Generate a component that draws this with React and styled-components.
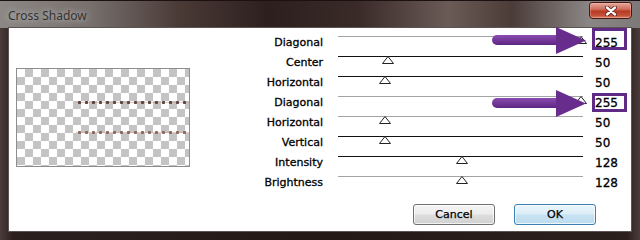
import React from "react";
import styled, { createGlobalStyle } from "styled-components";

const GlobalStyle = createGlobalStyle`
  html, body {
    margin: 0;
    padding: 0;
    background: #231816;
  }
  body {
    width: 640px;
    height: 240px;
    overflow: hidden;
  }
`;

const Window = styled.div`
  width: 640px;
  height: 240px;
  box-sizing: border-box;
  display: flex;
  flex-direction: column;
  padding: 0 8px 8px;
  font-family: "DejaVu Sans", sans-serif;
  background:
    linear-gradient(
        90deg,
        #8c8886 0%,
        #77706d 14%,
        #4a3a36 28%,
        #2c1f1d 42%,
        #3a2b28 56%,
        #6a5b57 70%,
        #4b3c38 80%,
        #8a8685 92%,
        #7d7978 100%
      )
      top / 100% 27px no-repeat,
    linear-gradient(90deg, #4a3c3a 0%, #2c201e 2%, #241917 50%, #2c201e 98%, #4a3c3a 100%);
  border-top: 1px solid #1a1110;
`;

const TitleBar = styled.div`
  height: 26px;
  display: flex;
  align-items: flex-start;
`;

const Title = styled.span`
  margin-top: 6px;
  font-family: "Noto Sans", sans-serif;
  font-size: 12px;
  color: #333;
  text-shadow: 0 0 6px rgba(235, 235, 235, 0.8);
`;

const CloseButton = styled.button`
  margin-left: auto;
  margin-top: 1px;
  width: 43px;
  height: 17px;
  padding: 0;
  display: flex;
  align-items: center;
  justify-content: center;
  border: 1px solid #4a1812;
  border-radius: 3px 3px 4px 4px;
  background: linear-gradient(180deg, #e3a99c 0%, #d0705d 40%, #b93a24 55%, #c4523b 85%, #dd8a76 100%);
  box-shadow: inset 0 0 0 1px rgba(255, 200, 190, 0.35);
`;

const Client = styled.div`
  flex: 1;
  display: flex;
  flex-direction: column;
  background: #fff;
  border: 1px solid #5c5452;
  padding: 0 35px 6px 0;
`;

const Main = styled.div`
  display: flex;
  flex: 1;
`;

const PreviewPane = styled.div`
  padding: 40px 0 0 7px;
`;

const Preview = styled.div`
  position: relative;
  width: 172px;
  height: 97px;
  border: 1px solid #8e8e8e;
  background-color: #fff;
  background-image: conic-gradient(#c4c4c4 25%, #fff 0 50%, #c4c4c4 0 75%, #fff 0);
  background-size: 16px 16px;
`;

const Dots = styled.div`
  position: absolute;
  left: 59px;
  right: 0;
  top: ${(p) => p.$top}px;
  height: 5px;
  background:
    radial-gradient(circle, ${(p) => p.$color} 1.3px, transparent 2px) 0 0 / 7px 5px repeat-x,
    linear-gradient(180deg, transparent 2px, rgba(215, 160, 145, 0.55) 2px 3px, transparent 3px);
`;

const SliderGrid = styled.div`
  display: grid;
  grid-template-columns: 148px 245px 1fr;
  grid-auto-rows: 20px;
  padding-top: 5px;
  align-content: start;
`;

const Label = styled.div`
  padding-right: 15px;
  text-align: right;
  font-size: 11px;
  line-height: 20px;
  color: #000;
  white-space: nowrap;
  -webkit-text-stroke: 0.3px #000;
`;

const Track = styled.div`
  position: relative;

  &::before {
    content: "";
    position: absolute;
    left: 0;
    right: 0;
    top: 3px;
    height: 1px;
    background: ${(p) => (p.$dark ? "#111" : "#a4a4a4")};
  }
`;

const Thumb = styled.svg`
  position: absolute;
  top: 3px;
`;

const Value = styled.div`
  position: relative;
  padding-left: 12px;
  font-size: 12px;
  line-height: 20px;
  color: #000;
  -webkit-text-stroke: 0.3px #000;
`;

const Highlight = styled.div`
  position: absolute;
  left: 9px;
  top: ${(p) => p.$top}px;
  width: 35px;
  height: ${(p) => p.$h}px;
  box-sizing: border-box;
  border: 3px solid #5f2a86;
`;

const Arrow = styled.svg`
  position: absolute;
  left: -91px;
  top: ${(p) => p.$top}px;
  z-index: 2;
`;

const ButtonRow = styled.div`
  display: flex;
  justify-content: flex-end;
  gap: 19px;
`;

const Button = styled.button`
  width: 82px;
  height: 21px;
  padding: 0;
  font-family: "DejaVu Sans", sans-serif;
  font-size: 11px;
  color: #000;
  -webkit-text-stroke: 0.25px #000;
  border-radius: 3px;
  border: 1px solid ${(p) => (p.$primary ? "#3c7fb1" : "#707070")};
  background: ${(p) =>
    p.$primary
      ? "linear-gradient(180deg, #eaf5fb 0%, #dcedf7 48%, #c8e2f2 52%, #bcdcef 100%)"
      : "linear-gradient(180deg, #f4f4f4 0%, #ececec 48%, #dedede 52%, #d0d0d0 100%)"};
  box-shadow: inset 0 0 0 1px rgba(255, 255, 255, 0.7);
`;

const sliders = [
  { label: "Diagonal", value: 255, pos: 0.99, dark: false, mark: { box: -5, h: 22, arrow: -6 } },
  { label: "Center", value: 50, pos: 0.204, dark: true },
  { label: "Horizontal", value: 50, pos: 0.19, dark: true },
  { label: "Diagonal", value: 255, pos: 0.99, dark: false, mark: { box: 0, h: 19, arrow: -3 } },
  { label: "Horizontal", value: 50, pos: 0.19, dark: false },
  { label: "Vertical", value: 50, pos: 0.19, dark: true },
  { label: "Intensity", value: 128, pos: 0.506, dark: true },
  { label: "Brightness", value: 128, pos: 0.506, dark: false },
];

function PointerArrow({ top }) {
  return (
    <Arrow $top={top} width="95" height="27" viewBox="0 0 95 27">
      <defs>
        <linearGradient id="shaft" x1="0" y1="0" x2="0" y2="1">
          <stop offset="0" stopColor="#8a4cb0" />
          <stop offset="1" stopColor="#5e2583" />
        </linearGradient>
      </defs>
      <rect x="0" y="8" width="70" height="10" rx="5" fill="url(#shaft)" />
      <polygon points="64,0 94,13.5 64,27" fill="#682c8d" />
    </Arrow>
  );
}

function CloseGlyph() {
  return (
    <svg width="12" height="10" viewBox="0 0 12 10">
      <path d="M2 1.5 L10 8.5 M10 1.5 L2 8.5" stroke="#5a1a10" strokeWidth="4" strokeLinecap="round" />
      <path d="M2 1.5 L10 8.5 M10 1.5 L2 8.5" stroke="#fff" strokeWidth="2.4" strokeLinecap="round" />
    </svg>
  );
}

export default function App() {
  return (
    <>
      <GlobalStyle />
      <Window>
        <TitleBar>
          <Title>Cross Shadow</Title>
          <CloseButton aria-label="Close">
            <CloseGlyph />
          </CloseButton>
        </TitleBar>
        <Client>
          <Main>
            <PreviewPane>
              <Preview>
                <Dots $top={31} $color="#5e4442" />
                <Dots $top={61} $color="#8c6a62" />
              </Preview>
            </PreviewPane>
            <SliderGrid>
              {sliders.map((s, i) => (
                <React.Fragment key={i}>
                  <Label>{s.label}</Label>
                  <Track $dark={s.dark}>
                    <Thumb
                      width="12"
                      height="8"
                      viewBox="0 0 12 8"
                      style={{ left: `calc(${s.pos * 100}% - 6px)` }}
                    >
                      <polygon points="6,0.5 11.5,7.5 0.5,7.5" fill="#fff" stroke="#222" strokeWidth="1" />
                    </Thumb>
                  </Track>
                  <Value>
                    {s.value}
                    {s.mark && (
                      <>
                        <Highlight $top={s.mark.box} $h={s.mark.h} />
                        <PointerArrow top={s.mark.arrow} />
                      </>
                    )}
                  </Value>
                </React.Fragment>
              ))}
            </SliderGrid>
          </Main>
          <ButtonRow>
            <Button>Cancel</Button>
            <Button $primary>OK</Button>
          </ButtonRow>
        </Client>
      </Window>
    </>
  );
}
